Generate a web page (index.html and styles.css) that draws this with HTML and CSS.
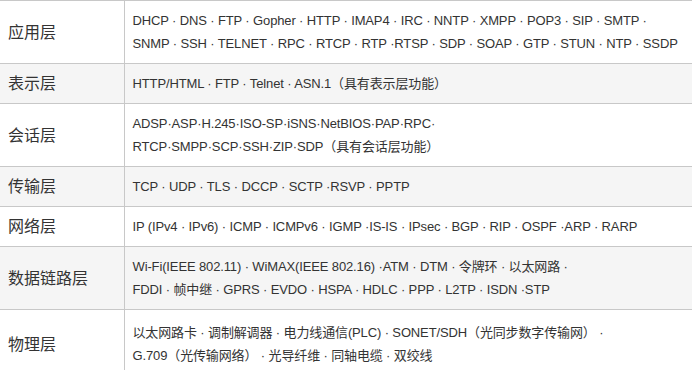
FILE: index.html
```html
<!DOCTYPE html>
<html lang="zh">
<head>
<meta charset="utf-8">
<link rel="stylesheet" href="styles.css">
</head>
<body>
<table class="layers">
  <colgroup>
    <col class="col-name">
    <col class="col-proto">
  </colgroup>
  <tr>
    <th>应用层</th>
    <td>DHCP · DNS · FTP · Gopher · HTTP · IMAP4 · IRC · NNTP · XMPP · POP3 · SIP · SMTP ·<br>SNMP · SSH · TELNET · RPC · RTCP · RTP ·RTSP · SDP · SOAP · GTP · STUN · NTP · SSDP</td>
  </tr>
  <tr class="alt">
    <th>表示层</th>
    <td>HTTP/HTML · FTP · Telnet · ASN.1（具有表示层功能）</td>
  </tr>
  <tr>
    <th>会话层</th>
    <td>ADSP·ASP·H.245·ISO-SP·iSNS·NetBIOS·PAP·RPC·<br>RTCP·SMPP·SCP·SSH·ZIP·SDP（具有会话层功能）</td>
  </tr>
  <tr class="alt">
    <th>传输层</th>
    <td>TCP · UDP · TLS · DCCP · SCTP ·RSVP · PPTP</td>
  </tr>
  <tr>
    <th>网络层</th>
    <td>IP (IPv4 · IPv6) · ICMP · ICMPv6 · IGMP ·IS-IS · IPsec · BGP · RIP · OSPF ·ARP · RARP</td>
  </tr>
  <tr class="alt">
    <th>数据链路层</th>
    <td>Wi-Fi(IEEE 802.11) · WiMAX(IEEE 802.16) ·ATM · DTM · 令牌环 · 以太网路 ·<br>FDDI · 帧中继 · GPRS · EVDO · HSPA · HDLC · PPP · L2TP · ISDN ·STP</td>
  </tr>
  <tr class="last">
    <th>物理层</th>
    <td>以太网路卡 · 调制解调器 · 电力线通信(PLC) · SONET/SDH（光同步数字传输网） ·<br>G.709（光传输网络） · 光导纤维 · 同轴电缆 · 双绞线</td>
  </tr>
</table>
</body>
</html>
```
FILE: styles.css
```css
html, body {
  margin: 0;
  padding: 0;
  background: #fff;
}
.layers {
  border-collapse: collapse;
  table-layout: fixed;
  width: 692px;
  color: #333;
  font-family: "Liberation Sans", Arial, "Noto Sans CJK SC", sans-serif;
}
.col-name {
  width: 124px;
}
.layers th,
.layers td {
  border-top: 1px solid #c8c8c8;
  border-bottom: 1px solid #c8c8c8;
  padding: 8px 8px;
  vertical-align: middle;
  text-align: left;
}
.layers th {
  font-weight: normal;
  font-size: 16px;
  line-height: 23px;
  border-right: 1px solid #c8c8c8;
  white-space: nowrap;
}
.layers td {
  font-size: 13px;
  line-height: 23px;
  white-space: nowrap;
  letter-spacing: -0.01em;
}
.layers .alt th,
.layers .alt td {
  background: #f5f5f5;
}
.layers .last th,
.layers .last td {
  padding-top: 11px;
  padding-bottom: 11px;
}
```
